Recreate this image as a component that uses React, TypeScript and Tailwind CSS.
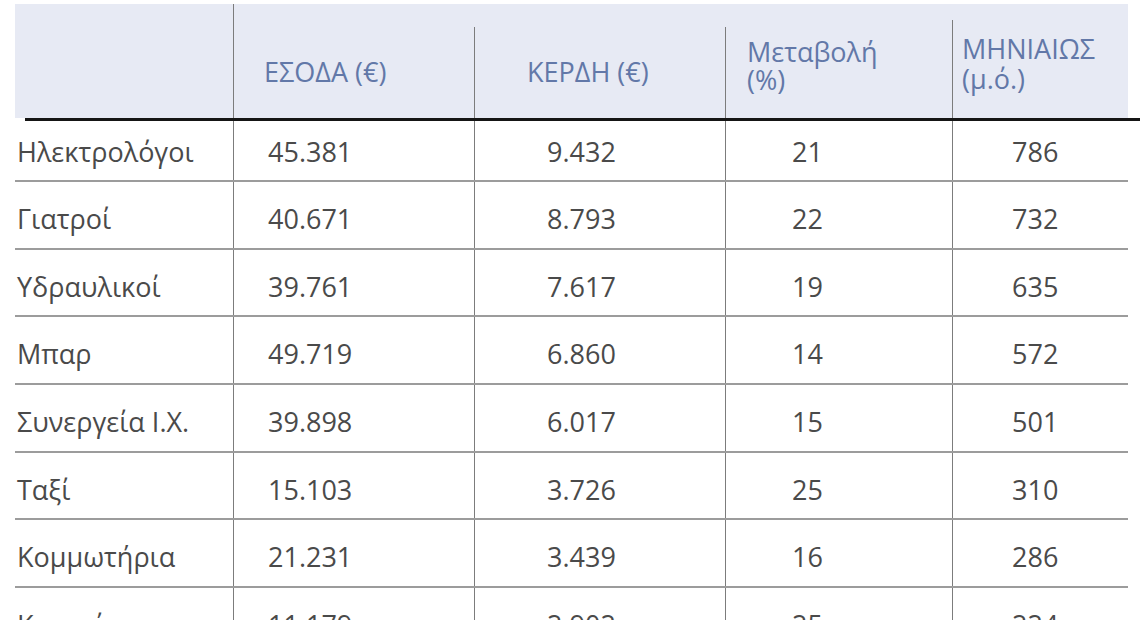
import React from "react"

interface Row {
  name:    string
  income:  string
  profit:  string
  change:  string
  monthly: string
}

const rows: Row[] = [
  { name: "Ηλεκτρολόγοι",   income: "45.381", profit: "9.432", change: "21", monthly: "786" },
  { name: "Γιατροί",        income: "40.671", profit: "8.793", change: "22", monthly: "732" },
  { name: "Υδραυλικοί",     income: "39.761", profit: "7.617", change: "19", monthly: "635" },
  { name: "Μπαρ",           income: "49.719", profit: "6.860", change: "14", monthly: "572" },
  { name: "Συνεργεία Ι.Χ.", income: "39.898", profit: "6.017", change: "15", monthly: "501" },
  { name: "Ταξί",           income: "15.103", profit: "3.726", change: "25", monthly: "310" },
  { name: "Κομμωτήρια",     income: "21.231", profit: "3.439", change: "16", monthly: "286" },
  { name: "Κουρεία",        income: "11.179", profit: "2.902", change: "25", monthly: "224" },
]

const cols = "grid grid-cols-[218px_241px_251px_227px_176px]"
const vline = "border-l border-[#7c7c7c]"

function DataRow({ row, first }: { row: Row; first: boolean }) {
  const h = first ? "h-[61px]" : "h-[67.7px]"
  const pt = first ? "pt-[15px]" : "pt-[21px]"
  return (
    <div className={`${cols} ${h} border-b-2 border-[#9c9c9c]`}>
      <div className={`${pt} pl-[2px]`}>{row.name}</div>
      <div className={`${vline} ${pt} pl-[34px]`}>{row.income}</div>
      <div className={`${vline} ${pt} pl-[72px]`}>{row.profit}</div>
      <div className={`${vline} ${pt} pl-[66px]`}>{row.change}</div>
      <div className={`${vline} ${pt} pl-[59px]`}>{row.monthly}</div>
    </div>
  )
}

export default function App() {
  return (
    <div
      className="w-[1140px] h-[620px] overflow-hidden bg-white pt-[4px] text-[27px] leading-[32px] text-[#4a4a4a]"
      style={{ fontFamily: '"Open Sans", "Noto Sans", sans-serif' }}
    >
      {/* Header */}
      <div className={`${cols} ml-[15px] w-[1113px] h-[114px] bg-[#e7eaf4] text-[#6278a8]`}>
        <div />
        <div className={`${vline} flex items-end pl-[30px] pb-[31px] leading-[30px]`}>ΕΣΟΔΑ (€)</div>
        <div className="pt-[23px]">
          <div className={`${vline} h-full flex items-end pl-[52px] pb-[31px] leading-[30px]`}>ΚΕΡΔΗ (€)</div>
        </div>
        <div className="pt-[23px]">
          <div className={`${vline} h-full flex items-end pl-[21px] pb-[24px] leading-[28px]`}>
            <span>Μεταβολή<br />(%)</span>
          </div>
        </div>
        <div className="pt-[16px]">
          <div className={`${vline} h-full flex items-end pl-[9px] pb-[24px] leading-[30px]`}>
            <span>ΜΗΝΙΑΙΩΣ<br />(μ.ό.)</span>
          </div>
        </div>
      </div>
      <div className="ml-[25px] h-[3px] bg-[#151515]" />

      {/* Body */}
      <div className="ml-[15px] w-[1113px]">
        {rows.map((row, i) => (
          <DataRow key={row.name} row={row} first={i === 0} />
        ))}
      </div>
    </div>
  )
}
